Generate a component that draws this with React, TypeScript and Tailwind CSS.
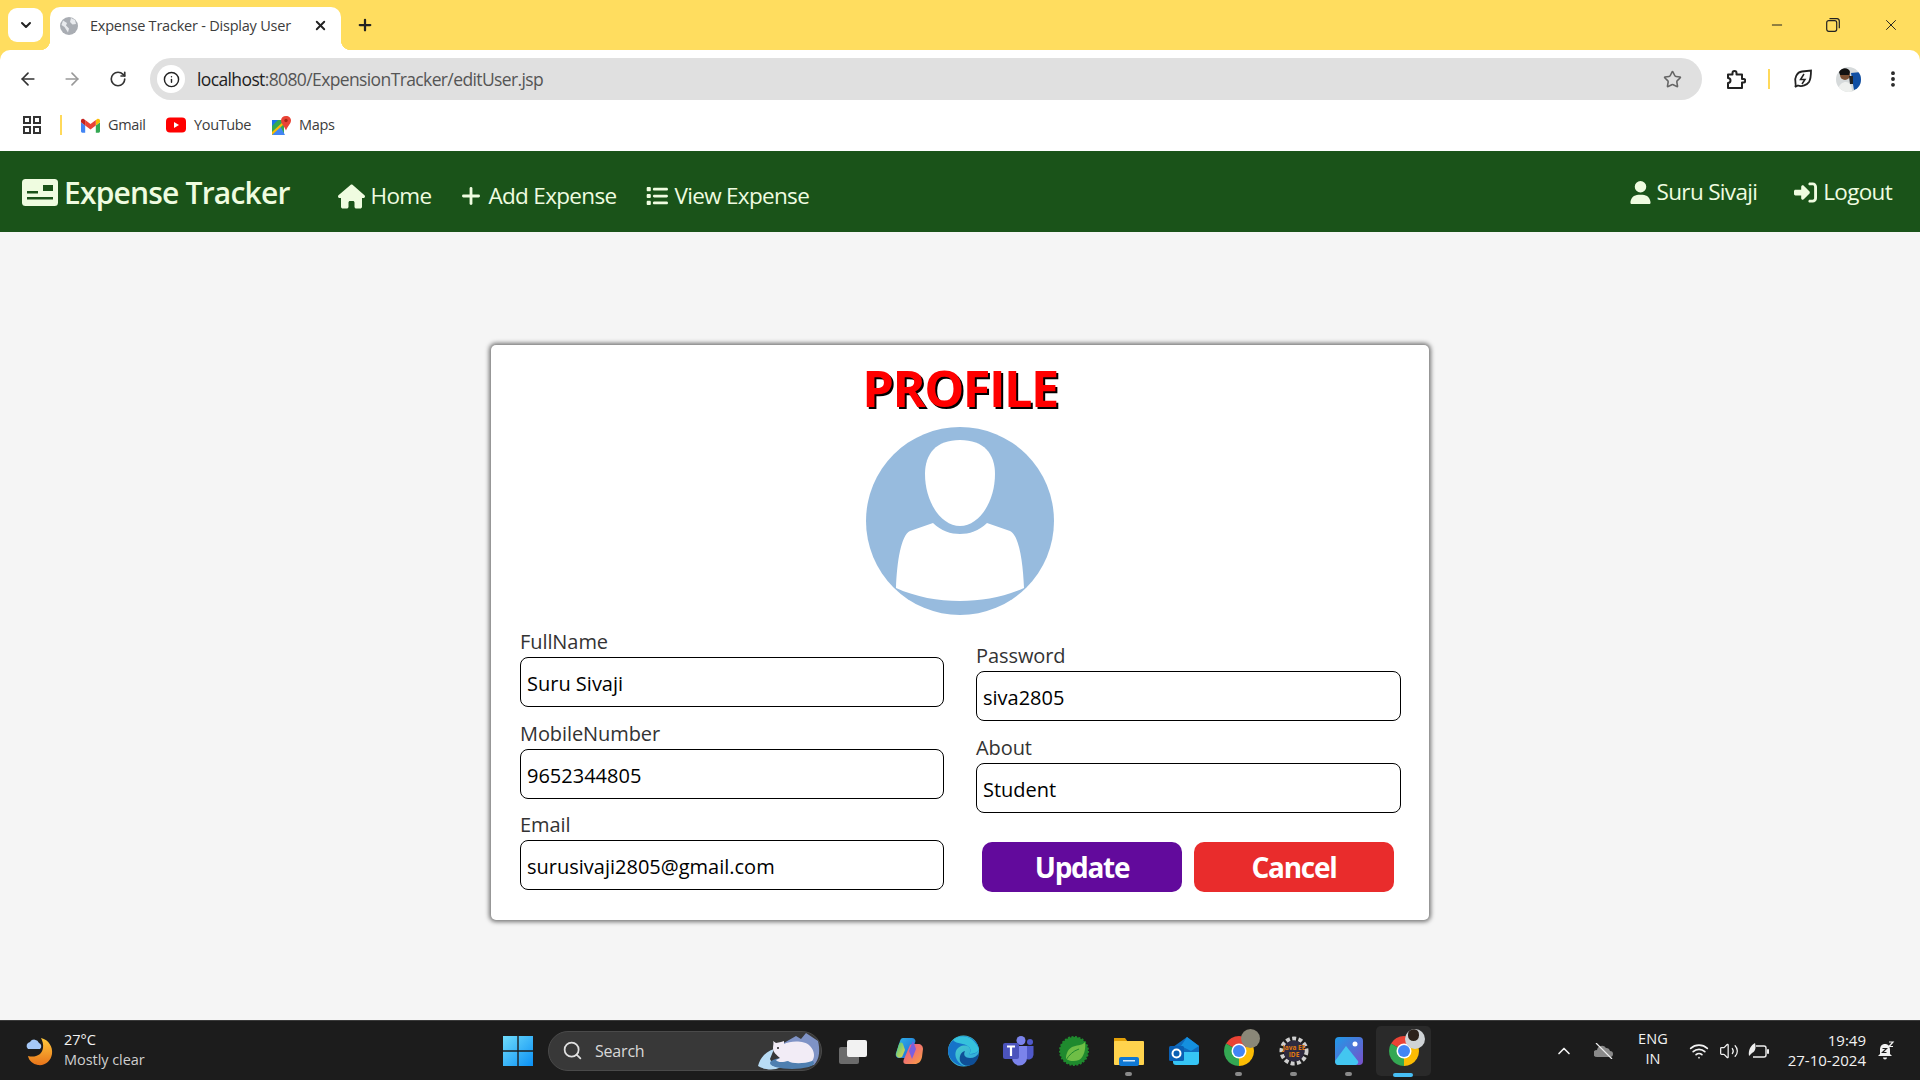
import React from "react";
import { ArrowLeft, ArrowRight, RotateCw, Info, Star, MoreVertical, Plus, X, ChevronDown, ChevronUp, Minus, Search, Wifi, Volume2 } from "lucide-react";
import { FaHouse, FaList, FaUser, FaRightToBracket } from "react-icons/fa6";

function Gmail() {
  return (
    <svg width="19" height="19" viewBox="0 0 24 24">
      <path fill="#4285F4" d="M1.6 21h3.7v-9L0 8v11.4C0 20.3.7 21 1.6 21" />
      <path fill="#34A853" d="M18.7 21h3.7c.9 0 1.6-.7 1.6-1.6V8l-5.3 4" />
      <path fill="#FBBC04" d="M18.7 5.1V12L24 8V6c0-2-2.3-3.1-3.8-1.9" />
      <path fill="#EA4335" d="M5.3 12V5.1L12 10.1l6.7-5V12L12 17" />
      <path fill="#C5221F" d="M0 6v2l5.3 4V5.1L3.8 4.1C2.3 2.9 0 4 0 6" />
    </svg>
  );
}

function YouTube() {
  return (
    <svg width="20" height="16" viewBox="0 0 20 16">
      <rect width="20" height="15" y="0.5" rx="4" fill="#ff0000" />
      <path d="M8 5 13 8 8 11Z" fill="#fff" />
    </svg>
  );
}

function Maps() {
  return (
    <svg width="19" height="19" viewBox="0 0 19 19">
      <path d="M0 4h12v15H0Z" fill="#34a853" />
      <path d="M0 19 8 10l5 9Z" fill="#4285f4" />
      <path d="M0 4h6L0 10Z" fill="#1a73e8" />
      <path d="M0 16 12 5v3L0 19Z" fill="#fbbc04" />
      <path d="M14 0c3 0 5 2 5 4.5 0 3-3 5-5 10-2-5-5-7-5-10C9 2 11 0 14 0Z" fill="#ea4335" />
      <circle cx="14" cy="4.5" r="1.7" fill="#a52714" />
    </svg>
  );
}

function ChromeLogo({ size = 30 }: { size?: number }) {
  return (
    <svg width={size} height={size} viewBox="4 4 40 40">
      <path d="M24 24 6.68 14A20 20 0 0 1 41.32 14Z" fill="#ea4335" />
      <path d="M24 24 41.32 14A20 20 0 0 1 24 44Z" fill="#fbbc04" />
      <path d="M24 24V44A20 20 0 0 1 6.68 14Z" fill="#34a853" />
      <circle cx="24" cy="24" r="10" fill="#fff" />
      <circle cx="24" cy="24" r="8" fill="#4285f4" />
    </svg>
  );
}

function TabStrip() {
  return (
    <div className="relative flex h-[50px] items-end bg-[#ffdd5f] pl-2">
      <div className="mb-2 flex h-[34px] w-[35px] items-center justify-center rounded-[9px] bg-white">
        <ChevronDown size={16} strokeWidth={3} className="text-[#222]" />
      </div>
      <div className="relative ml-[7px] flex h-[43px] w-[291px] items-center rounded-t-[10px] bg-white pb-[6px] pl-[10px]">
        <span className="absolute bottom-0 left-[-10px] h-[10px] w-[10px] bg-[radial-gradient(circle_at_0_0,#ffdd5f_10px,#fff_10.5px)]" />
        <span className="absolute bottom-0 right-[-10px] h-[10px] w-[10px] bg-[radial-gradient(circle_at_100%_0,#ffdd5f_10px,#fff_10.5px)]" />
        <svg width="18" height="18" viewBox="0 0 18 18">
          <circle cx="9" cy="9" r="9" fill="#a9adb3" />
          <path d="M3 3.5 7 6l-1 2.5 3 3-1 4L4.500 10 1.500 8ZM11 1l4 2 1 4-3.500.5L10 5Z" fill="#e8eaed" />
        </svg>
        <span className="ml-[12px] text-[14.5px] tracking-[-0.22px] whitespace-nowrap text-[#3c3c3c]">Expense Tracker - Display User</span>
        <X size={15} strokeWidth={3} className="ml-[22px] text-[#222]" />
      </div>
      <Plus size={18} strokeWidth={3} className="mb-[16px] ml-[15px] text-[#222]" />
      <div className="absolute top-0 right-0 flex h-[50px] items-center pr-[20px]">
        <Minus size={16} strokeWidth={1.5} className="mr-[41px] text-[#222]" />
        <svg width="14" height="14" viewBox="0 0 14 14" fill="none" stroke="#222" strokeWidth="1.200" className="mr-[42px]">
          <rect x="0.700" y="2.700" width="10" height="10.600" rx="2" />
          <path d="M3.500 0.700h7.500a2.500 2.500 0 0 1 2.300 2.500v7" />
        </svg>
        <X size={18} strokeWidth={1.3} className="text-[#222]" />
      </div>
    </div>
  );
}

function Toolbar() {
  return (
    <div className="flex h-[50px] items-center rounded-t-[10px] bg-white pt-[8px]">
      <div className="flex w-[150px] items-center pl-[18px] text-[#333]">
        <ArrowLeft size={20} strokeWidth={2} />
        <ArrowRight size={20} strokeWidth={2} className="ml-[24px] text-[#999]" />
        <RotateCw size={18} strokeWidth={2.2} className="ml-[27px]" />
      </div>
      <div className="flex h-[42px] w-[1552px] items-center rounded-full bg-[#e0e0e0] pl-[7px]">
        <div className="flex h-[28px] w-[28px] items-center justify-center rounded-full bg-white">
          <Info size={17} strokeWidth={2} className="text-[#222]" />
        </div>
        <span className="ml-[12px] text-[17.5px] tracking-[-0.62px] text-[#222]">
          localhost<span className="text-[#555]">:8080/ExpensionTracker/editUser.jsp</span>
        </span>
        <Star size={19} strokeWidth={2} className="mr-[20px] ml-auto text-[#666]" />
      </div>
      <div className="flex flex-1 items-center pl-[24px]">
        <svg width="20" height="20" viewBox="0 0 20 20" fill="none" stroke="#222" strokeWidth="2" strokeLinejoin="round">
          <path d="M2 5.500h4.500V4a2 2 0 0 1 4 0v1.500H16v4.500h1.500a1.500 1.500 0 0 1 0 3.500H16V19H2v-5a2.500 2.500 0 0 0 0-5Z" />
        </svg>
        <span className="ml-[22px] h-[20px] w-[2px] bg-[#ffd95a]" />
        <svg width="20" height="20" viewBox="0 0 20 20" fill="none" stroke="#222" strokeWidth="1.800" className="ml-[23px]">
          <path d="M2 18c1-1 1-2 .5-4C1 9 4 3 9 2.500L18 1.500c0 5-.5 9-2 11.500-2 3-7 5-11 3.500L2 18Z" />
          <path d="M11 5 7.500 10.500H12L9 15" strokeWidth="1.500" />
        </svg>
        <svg width="25" height="25" viewBox="0 0 25 25" className="ml-[23px]">
          <clipPath id="pf"><circle cx="12.500" cy="12.500" r="12.500" /></clipPath>
          <g clipPath="url(#pf)">
            <rect width="25" height="25" fill="#d6dadb" />
            <path d="M15 6 25 5v15l-7 3Z" fill="#0f4ea3" />
            <circle cx="9" cy="8" r="5" fill="#7a5034" />
            <path d="M3 5c2-5 10-5 11 0l-1 3H4Z" fill="#111" />
            <path d="M2 25c0-8 5-10 8-10s6 3 6 10Z" fill="#eef0ee" />
            <path d="M13 9h4v8h-3Z" fill="#222" />
          </g>
        </svg>
        <MoreVertical size={20} strokeWidth={2.6} className="ml-[22px] text-[#222]" />
      </div>
    </div>
  );
}

function Bookmarks() {
  return (
    <div className="flex h-[51px] items-center bg-white pb-[1px] pl-[23px] text-[14.5px] tracking-[-0.35px] text-[#3c3c3c]">
      <svg width="18" height="18" viewBox="0 0 18 18" fill="none" stroke="#333" strokeWidth="2">
        <rect x="1" y="1" width="6" height="6" />
        <rect x="11" y="1" width="6" height="6" />
        <rect x="1" y="11" width="6" height="6" />
        <rect x="11" y="11" width="6" height="6" />
      </svg>
      <span className="ml-[19px] h-[20px] w-[2px] bg-[#ffd95a]" />
      <span className="ml-[19px]"><Gmail /></span>
      <span className="ml-[8px] w-[38px] whitespace-nowrap">Gmail</span>
      <span className="ml-[20px]"><YouTube /></span>
      <span className="ml-[8px] w-[58px] whitespace-nowrap">YouTube</span>
      <span className="ml-[20px]"><Maps /></span>
      <span className="ml-[8px] whitespace-nowrap">Maps</span>
    </div>
  );
}

function Navbar() {
  const c = "flex items-center text-[22.5px] tracking-[-0.68px] whitespace-nowrap";
  return (
    <nav className="flex h-[81px] items-center bg-[#1a5319] pr-[28px] pl-[22px] text-[#effce0]">
      <div className="mt-[2px] flex items-center">
        <svg width="36" height="27" viewBox="0 0 36 27">
          <rect width="36" height="27" rx="3.500" fill="#effce0" />
          <rect x="21" y="6" width="10" height="6" fill="#1a5319" />
          <rect x="5" y="12" width="11" height="2.500" fill="#1a5319" />
          <rect x="5" y="18" width="26" height="2.500" fill="#1a5319" />
        </svg>
        <span className="ml-[6px] text-[30px] font-semibold tracking-[-0.8px] whitespace-nowrap">Expense Tracker</span>
      </div>
      <div className={`${c} mt-[9px] ml-[48px]`}>
        <FaHouse size={27} />
        <span className="ml-[6px]">Home</span>
      </div>
      <div className={`${c} mt-[9px] ml-[29px]`}>
        <Plus size={26} strokeWidth={2.6} className="mx-[-2px]" />
        <span className="ml-[6px]">Add Expense</span>
      </div>
      <div className={`${c} mt-[9px] ml-[30px]`}>
        <FaList size={22} />
        <span className="ml-[6px]">View Expense</span>
      </div>
      <div className={`${c} mt-[1px] ml-auto`}>
        <FaUser size={23} />
        <span className="ml-[5px]">Suru Sivaji</span>
      </div>
      <div className={`${c} mt-[1px] ml-[37px]`}>
        <FaRightToBracket size={23} />
        <span className="ml-[6px]">Logout</span>
      </div>
    </nav>
  );
}

function Field({ label, value, mb }: { label: string; value: string; mb: string }) {
  return (
    <label className={`block ${mb}`}>
      <span className="block h-[29px] text-[20px] leading-[27px] tracking-[-0.08px] text-[#333]">{label}</span>
      <input
        readOnly
        value={value}
        className="block h-[50px] w-full rounded-[8px] border border-black bg-white px-[6px] pt-[2px] text-[20px] tracking-[0px] text-black outline-none"
      />
    </label>
  );
}

function Avatar() {
  return (
    <svg width="188" height="188" viewBox="0 0 188 188" className="mx-auto block">
      <circle cx="94" cy="94" r="94" fill="#97bbde" />
      <path d="M94 13C70 13 59 27 59 47 59 75 75 99 94 99s35-24 35-52C129 27 118 13 94 13Z" fill="#fff" />
      <path d="M67 96 44 104C35 108 31 135 30 161 50 170 72 174 94 174s44-4 64-13C157 135 153 108 144 104L121 96C113 104 103 107 94 107S75 104 67 96Z" fill="#fff" />
    </svg>
  );
}

function Card() {
  return (
    <div className="mt-[113px] h-[575px] w-[938px] rounded-[5px] bg-white px-[29px] pt-[10px] shadow-[0_0_4px_2px_#777]">
      <h1 className="mb-[6px] text-center text-[50.5px] leading-[66px] font-bold tracking-[-1.6px] text-[#ff0000] [text-shadow:2px_2px_0_#000]">PROFILE</h1>
      <Avatar />
      <div className="mt-[13px] grid grid-cols-[424px_425px] gap-x-[32px]">
        <div>
          <Field label="FullName" value="Suru Sivaji" mb="mb-[13px]" />
          <Field label="MobileNumber" value="9652344805" mb="mb-[12px]" />
          <Field label="Email" value="surusivaji2805@gmail.com" mb="mb-0" />
        </div>
        <div className="pt-[14px]">
          <Field label="Password" value="siva2805" mb="mb-[13px]" />
          <Field label="About" value="Student" mb="mb-0" />
          <div className="mt-[29px] flex gap-[12px] pl-[6px]">
            <button className="h-[50px] w-[200px] rounded-[10px] bg-[#620a9c] text-[28px] font-bold tracking-[-1.3px] text-white">Update</button>
            <button className="h-[50px] w-[200px] rounded-[10px] bg-[#e92c2c] text-[28px] font-bold tracking-[-1.3px] text-white">Cancel</button>
          </div>
        </div>
      </div>
    </div>
  );
}

function Moon() {
  return (
    <svg width="28" height="30" viewBox="0 0 28 30">
      <defs>
        <linearGradient id="mn" x1="0" y1="0" x2="0" y2="1">
          <stop offset="0" stopColor="#ffc93c" />
          <stop offset="1" stopColor="#e8741a" />
        </linearGradient>
      </defs>
      <path d="M16 2c8 2 12 9 11 16-1 7-7 12-14 11C8 28 4 25 3 20c7 2 14-1 15-8 .5-4-.5-7-2-10Z" fill="url(#mn)" />
      <path d="M3 13a4 4 0 0 1 2-7 5 5 0 0 1 9 1 3.500 3.500 0 0 1 1 6H3Z" fill="#a5c8f7" />
    </svg>
  );
}

function Bear() {
  return (
    <svg width="62" height="38" viewBox="0 0 62 38">
      <path d="M24 12 38 4l5 3 5-6 12 8c2 8 2 18-4 24l-20 3Z" fill="#7f93c6" />
      <path d="M0 34c2-8 7-14 16-17l-4 10c2 5 8 6 14 7l-8 3c-7 1-13 0-18-3Z" fill="#b8dcf5" />
      <ellipse cx="34" cy="31" rx="22" ry="6" fill="#4f7fb0" />
      <path d="M15 9l3 2 5-1 3-1 0 3c6-3 20-4 26 2 5 5 5 12 2 15-8 3-20 3-24 0-4 1-10 2-12-1l4-2c-3-3-7-5-7-10 0-3 1-5 0-7Z" fill="#f2ecf6" />
      <circle cx="20" cy="16" r="1" fill="#222" />
    </svg>
  );
}

function TaskIcon({ children, dot, active }: { children: React.ReactNode; dot?: boolean; active?: boolean }) {
  return (
    <div className={`relative flex h-[50px] w-[55px] shrink-0 items-center justify-center ${active ? "rounded-[5px] bg-[#2a2a2a]" : ""}`}>
      {children}
      {dot && <span className="absolute bottom-[0px] left-[24px] h-[4px] w-[7px] rounded-full bg-[#8a8a8a]" />}
      {active && <span className="absolute bottom-[-1px] left-[17px] h-[4px] w-[20px] rounded-full bg-[#47bff5]" />}
    </div>
  );
}

function Taskbar() {
  return (
    <footer className="flex h-[60px] shrink-0 items-center border-t border-[#3a3a3a] bg-[#1c1c1c] text-[#f2f2f2]">
      <div className="flex w-[503px] shrink-0 items-center pl-[25px]">
        <Moon />
        <div className="mb-[2px] ml-[11px] text-[14.5px] leading-[20px] tracking-[-0.05px]">
          <div>27°C</div>
          <div className="text-[#cfcfcf]">Mostly clear</div>
        </div>
      </div>
      <svg width="30" height="30" viewBox="0 0 30 30" className="shrink-0">
        <defs>
          <linearGradient id="wn" x1="0" y1="0" x2="1" y2="1">
            <stop offset="0" stopColor="#6fdcfb" />
            <stop offset="1" stopColor="#0a90f5" />
          </linearGradient>
        </defs>
        <path d="M0 0h14.300v14.300H0ZM15.700 0H30v14.300H15.700ZM0 15.700h14.300V30H0ZM15.700 15.700H30V30H15.700Z" fill="url(#wn)" />
      </svg>
      <div className="ml-[15px] flex h-[40px] w-[274px] shrink-0 items-center rounded-full border border-[#4a4a4a] bg-[#383838] pl-[13px]">
        <Search size={21} strokeWidth={2} className="text-[#e0e0e0]" />
        <span className="ml-[12px] text-[16px] tracking-[-0.2px] text-[#d8d8d8]">Search</span>
        <span className="mr-[1px] ml-auto"><Bear /></span>
      </div>
      <div className="ml-[4px] flex items-center">
        <TaskIcon>
          <svg width="30" height="30" viewBox="0 0 30 30">
            <rect x="0" y="11" width="20" height="17" rx="2" fill="#6b6b6b" />
            <rect x="8" y="4" width="20" height="17" rx="2" fill="#f2f2f2" />
          </svg>
        </TaskIcon>
        <TaskIcon>
          <svg width="30" height="30" viewBox="0 0 30 30">
            <defs>
              <linearGradient id="c1" x1="0" y1="0" x2="1" y2="1"><stop offset="0" stopColor="#2fb7e8" /><stop offset="1" stopColor="#1f62d6" /></linearGradient>
              <linearGradient id="c2" x1="0" y1="0" x2="1" y2="1"><stop offset="0" stopColor="#e94f9a" /><stop offset="1" stopColor="#f9a13c" /></linearGradient>
              <linearGradient id="c3" x1="0" y1="0" x2="1" y2="1"><stop offset="0" stopColor="#37c98a" /><stop offset="1" stopColor="#f5d547" /></linearGradient>
            </defs>
            <path d="M9 2h9c2 0 3 1 3.500 3L17 20c-.5 1.500-1.500 2-3 2H5c-2 0-4-2-3-5L6 5c.5-2 1.500-3 3-3Z" fill="url(#c1)" />
            <path d="M2 18 5 8c1-2 3-2 4 0l2 6-3 7c-3 2-6 0-6-3Z" fill="url(#c3)" />
            <path d="M21 8h3c3 0 5 2 5 5l-1 8c-1 5-4 7-7 7h-9c-3 0-3-3-2-5l6-14c1-1 3-1 5-1Z" fill="url(#c2)" />
            <path d="M19 5l3 8-4 10-3-8Z" fill="#7a5fe0" />
          </svg>
        </TaskIcon>
        <TaskIcon>
          <svg width="31" height="32" viewBox="0 0 31 32">
            <defs>
              <linearGradient id="e1" x1="0" y1="0" x2="1" y2="1"><stop offset="0" stopColor="#52d6c6" /><stop offset="1" stopColor="#2aa3e0" /></linearGradient>
            </defs>
            <circle cx="15.500" cy="16" r="15.500" fill="url(#e1)" />
            <path d="M0 16C0 8 7 1 15 1c8 0 15 6 16 13-1 4-6 6-10 5 2-2 2-5 0-7-4-3-11-1-13 4-2 5 1 12 8 15C8 31 0 24 0 16Z" fill="#1673c9" />
            <path d="M31 18c0 4-2 8-5 11-5 3-12 2-14-3-1-5 1-9 5-10-2 4 0 7 5 7 4 0 7-2 9-5Z" fill="#0f4f97" />
            <path d="M5 5c6-6 20-6 26 9-1 4-6 5-10 5 2-2 2-5 0-7-5-5-12-2-16-7Z" fill="#35c1dc" />
          </svg>
        </TaskIcon>
        <TaskIcon>
          <svg width="31" height="30" viewBox="0 0 31 30">
            <circle cx="18" cy="4.500" r="4.500" fill="#7b83eb" />
            <circle cx="27" cy="6" r="3" fill="#5059c9" />
            <path d="M22 10h8.500v9a5 5 0 0 1-8.500 3Z" fill="#5059c9" />
            <path d="M9 10h15v12a7.500 7.500 0 0 1-15 0Z" fill="#7b83eb" />
            <rect x="0" y="7" width="16" height="16" rx="2" fill="#4b53bc" />
            <path d="M4 10.500h8M8 10.500V20" stroke="#fff" strokeWidth="2.200" />
          </svg>
        </TaskIcon>
        <TaskIcon>
          <svg width="30" height="32" viewBox="0 0 30 32">
            <circle cx="15" cy="16" r="14" fill="#1f8a2e" stroke="#1f8a2e" strokeWidth="2" strokeDasharray="2 1.500" />
            <path d="M26 7c1 7-1 15-6 18-5 2-10 1-13-1 0-4 1-9 6-12 4-2 10-1 13-5Z" fill="#6fbe46" />
            <path d="M7 25c3-5 7-9 13-11" stroke="#1f8a2e" strokeWidth="1" fill="none" />
          </svg>
        </TaskIcon>
        <TaskIcon dot>
          <svg width="30" height="30" viewBox="0 0 30 30">
            <path d="M0 2h11l3 4h-14Z" fill="#e3a008" />
            <rect y="5" width="30" height="24" rx="1" fill="#ffd34d" />
            <rect x="5" y="21" width="20" height="9" rx="2" fill="#0f78d4" />
            <rect x="9" y="24" width="12" height="1.500" fill="#cfe6fa" />
          </svg>
        </TaskIcon>
        <TaskIcon>
          <svg width="30" height="30" viewBox="0 0 30 30">
            <path d="M4 15h26v11a3 3 0 0 1-3 3H7a3 3 0 0 1-3-3Z" fill="#36c5f5" />
            <path d="M4 11 18 1l12 9v6H4Z" fill="#0f6cbd" />
            <path d="M18 1l12 9-8 5-10-5Z" fill="#1490df" />
            <rect x="0" y="10" width="15" height="15" rx="1.500" fill="#0a5fb4" />
            <circle cx="7.500" cy="17.500" r="4" fill="none" stroke="#fff" strokeWidth="2" />
          </svg>
        </TaskIcon>
        <TaskIcon dot>
          <div className="relative">
            <ChromeLogo size={30} />
            <span className="absolute top-[-7px] right-[-6px] h-[19px] w-[19px] rounded-full bg-[#8a8778]" />
          </div>
        </TaskIcon>
        <TaskIcon dot>
          <svg width="30" height="30" viewBox="0 0 30 30">
            <circle cx="15" cy="15" r="12.500" fill="none" stroke="#cfcfcf" strokeWidth="4" strokeDasharray="4 2.300" />
            <circle cx="15" cy="15" r="10.500" fill="#2e2a3f" />
            <text x="15" y="14" textAnchor="middle" fontSize="6.500" fontWeight="700" fill="#e07a10" fontFamily="'Open Sans',sans-serif">Java EE</text>
            <text x="15" y="21" textAnchor="middle" fontSize="6.500" fontWeight="700" fill="#e07a10" fontFamily="'Open Sans',sans-serif">IDE</text>
          </svg>
        </TaskIcon>
        <TaskIcon dot>
          <svg width="28" height="28" viewBox="0 0 28 28">
            <defs>
              <linearGradient id="p1" x1="0" y1="0" x2="1" y2="1"><stop offset="0" stopColor="#1f9be8" /><stop offset="1" stopColor="#7a4fc9" /></linearGradient>
            </defs>
            <rect width="28" height="28" rx="4" fill="url(#p1)" />
            <circle cx="20" cy="7" r="2.500" fill="#fff" />
            <path d="M0 24 11 9l12 15c1 2-1 4-3 4H3c-2 0-3-2-3-4Z" fill="#43c6f0" />
          </svg>
        </TaskIcon>
        <TaskIcon active>
          <div className="relative">
            <ChromeLogo size={30} />
            <span className="absolute top-[-7px] right-[-6px] h-[20px] w-[20px] overflow-hidden rounded-full bg-[#cfd3d6]">
              <span className="absolute top-0 left-[3px] block h-[12px] w-[11px] rounded-full bg-[#2d231c]" />
            </span>
          </div>
        </TaskIcon>
      </div>
      <div className="ml-auto flex items-center pr-[25px]">
        <ChevronUp size={20} strokeWidth={2} />
        <svg width="20" height="16" viewBox="0 0 20 16" className="ml-[20px]">
          <path d="M3 14a3.500 3.500 0 0 1 0-7 5 5 0 0 1 9-2 4 4 0 0 1 4 3 3 3 0 0 1 0 6Z" fill="#8a8a8a" />
          <path d="M2 0 18 16" stroke="#eee" strokeWidth="1.200" />
        </svg>
        <div className="mb-[3px] ml-[20px] w-[38px] text-center text-[14.5px] leading-[20px] tracking-[0.1px]">
          <div>ENG</div>
          <div>IN</div>
        </div>
        <Wifi size={20} strokeWidth={2} className="ml-[17px]" />
        <Volume2 size={20} strokeWidth={1.500} className="ml-[10px]" />
        <svg width="21" height="18" viewBox="0 0 21 18" fill="none" stroke="#eee" strokeWidth="1.400" className="ml-[9px]">
          <path d="M8 4h8a2 2 0 0 1 2 2v7a2 2 0 0 1-2 2H5" />
          <path d="M19 8h1.500v3H19" fill="#eee" />
          <path d="M1 14C0 8 3 3 7 1c1 4 1 8-3 10Z" fill="#eee" stroke="none" />
        </svg>
        <div className="mb-[2px] ml-[13px] w-[84px] text-right text-[15px] leading-[20px] tracking-[0px] whitespace-nowrap">
          <div>19:49</div>
          <div>27-10-2024</div>
        </div>
        <svg width="18" height="20" viewBox="0 0 18 20" className="ml-[11px]">
          <path d="M8 3c3 0 5 2 5 6v4l2 2H1l2-2V9c0-4 2-6 5-6Z" fill="#f2f2f2" />
          <path d="M6 16.500h4a2 2 0 0 1-4 0Z" fill="#f2f2f2" />
          <path d="M5.500 7.500h4l-4 4h4" fill="none" stroke="#1c1c1c" strokeWidth="1.200" />
          <path d="M12 1h4l-4 4.500h4" fill="none" stroke="#f2f2f2" strokeWidth="1.200" />
        </svg>
      </div>
    </footer>
  );
}

export default function App() {
  return (
    <div className="flex h-[1080px] w-full flex-col overflow-hidden bg-[#f5f5f5] font-['Open_Sans',sans-serif]">
      <div className="h-[151px] shrink-0 bg-[#ffdd5f]">
        <TabStrip />
        <Toolbar />
        <Bookmarks />
      </div>
      <Navbar />
      <main className="flex flex-1 justify-center">
        <Card />
      </main>
      <Taskbar />
    </div>
  );
}
